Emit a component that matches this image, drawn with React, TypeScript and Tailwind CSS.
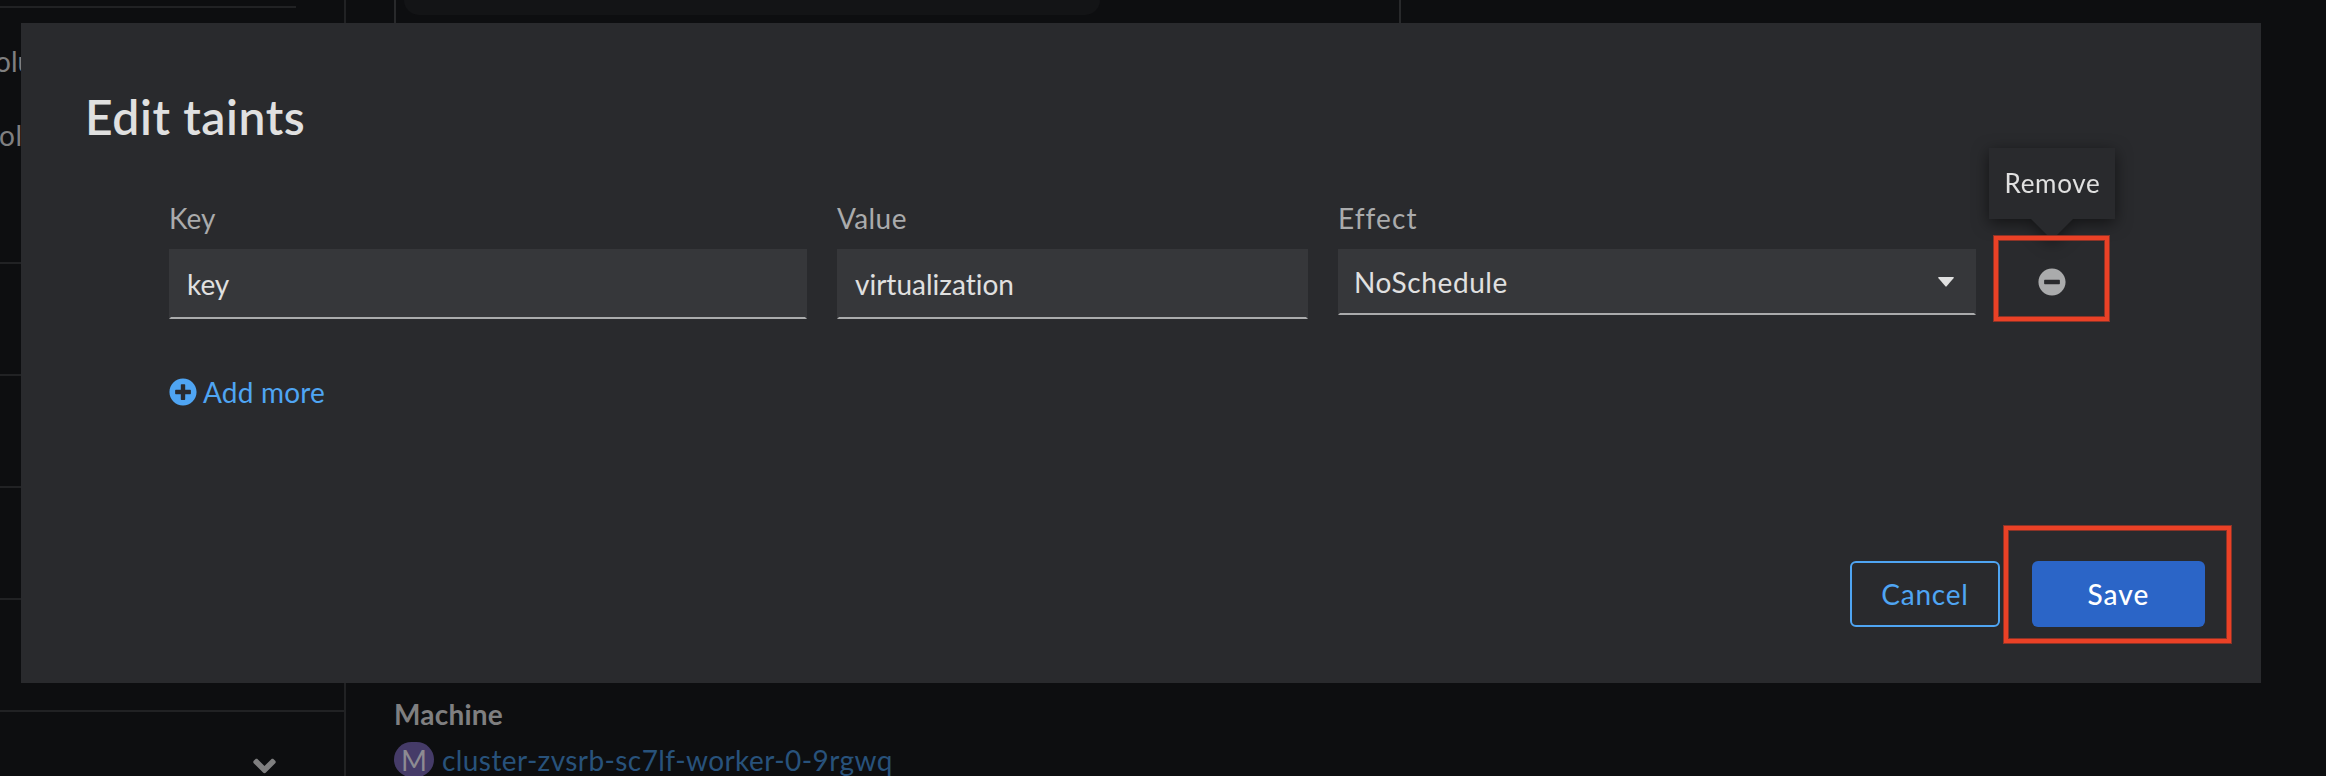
import React from "react";
import { FaPlusCircle, FaMinusCircle, FaAngleDown } from "react-icons/fa";

function Backdrop() {
  return (
    <div className="flex h-[776px] w-full text-[28px] text-[#7f7f80]">
      <aside className="flex w-[346px] shrink-0 flex-col border-r-2 border-[#212224]">
        <div className="h-[8px] w-[296px] border-b-2 border-[#212224]" />
        <div className="h-[256px] border-b-2 border-[#212224] pt-[32px] leading-[42px]">
          <div className="-ml-[5px] h-[74px] whitespace-nowrap">olu</div>
          <div className="-ml-px whitespace-nowrap tracking-[0.5px]">ol</div>
        </div>
        <div className="h-[112px] border-b-2 border-[#212224]" />
        <div className="h-[112px] border-b-2 border-[#212224]" />
        <div className="h-[112px] border-b-2 border-[#212224]" />
        <div className="h-[112px] border-b-2 border-[#212224]" />
        <div className="flex h-[64px] justify-end overflow-hidden pt-[36px] pr-[68px]">
          <FaAngleDown className="h-[36px] w-[23px] shrink-0" />
        </div>
      </aside>
      <main className="flex flex-1 flex-col pl-[48px]">
        <div className="h-[300px] w-[1007px] shrink-0 border-x-2 border-[#28292b] px-[8px]">
          <div className="h-[15px] w-[696px] rounded-b-[30px] bg-[#131416]" />
        </div>
        <div className="pt-[393px]">
          <div className="h-[49px] font-bold leading-[42px] tracking-[0.2px]">Machine</div>
          <div className="flex items-center leading-[34px]">
            <span className="flex h-[35px] w-[40px] items-center justify-center rounded-[20px] bg-[#453b68] text-[#8d8b92]">M</span>
            <span className="ml-[8px] tracking-[0.42px] text-[#28527b]">cluster-zvsrb-sc7lf-worker-0-9rgwq</span>
          </div>
        </div>
      </main>
    </div>
  );
}

type FieldProps = { label: string; value: string; className: string; labelClass?: string };

function Field({ label, value, className, labelClass = "" }: FieldProps) {
  return (
    <div className={className}>
      <div className={`h-[53px] leading-[44px] text-[#aaabac] ${labelClass}`}>{label}</div>
      <div className="flex h-[70px] items-center border-2 border-transparent border-b-[#aaabac] bg-[#36373a] px-[16px] text-[#e0e0e0]">
        {value}
      </div>
    </div>
  );
}

function Highlight({ className }: { className: string }) {
  return (
    <div
      className={`pointer-events-none absolute border-[5px] border-[#ea4126] shadow-[inset_0_0_0_1px_#8c3327] outline-1 -outline-offset-1 outline-[#8c3327] ${className}`}
    />
  );
}

function Modal() {
  return (
    <div className="absolute left-[21px] top-[23px] flex h-[660px] w-[2240px] flex-col bg-[#292a2d] text-[28px]">
      <h1 className="pl-[64px] pt-[65px] text-[48px] font-semibold leading-[58px] tracking-[0.6px] text-[#e0e0e0]">Edit taints</h1>
      <div className="mt-[50px] flex pl-[148px]">
        <Field label="Key" value="key" className="w-[638px]" />
        <Field label="Value" value="virtualization" className="ml-[30px] w-[471px]" labelClass="tracking-[0.4px]" />
        <div className="ml-[30px] w-[638px]">
          <div className="h-[53px] leading-[44px] tracking-[1.1px] text-[#aaabac]">Effect</div>
          <div className="flex h-[66px] items-center justify-between border-2 border-transparent border-b-[#aaabac] bg-[#36373a] pl-[14px] pr-[20px] text-[#e0e0e0]">
            <span className="tracking-[0.6px]">NoSchedule</span>
            <svg viewBox="0 0 16 10" className="h-[10px] w-[16px]" fill="currentColor">
              <path d="M0.8 0H15.2Q16.5 0 15.5 1.2L8.6 9.3Q8 10 7.4 9.3L0.5 1.2Q-.5 0 .8 0Z" />
            </svg>
          </div>
        </div>
        <div className="relative flex w-[152px] flex-col items-center pt-[72px]">
          <FaMinusCircle className="size-[28px] text-[#aaabac]" />
          <div className="absolute left-[13px] top-[-48px] drop-shadow-[0_4px_8px_rgba(0,0,0,0.55)]">
            <div className="h-[71px] w-[126px] bg-[#292a2d] pl-px text-center text-[26px] leading-[70px] tracking-[0.7px] text-[#e0e0e0]">Remove</div>
            <svg viewBox="0 0 44 22" className="mx-auto -mt-px h-[22px] w-[44px]">
              <path d="M0 0H44L22 22Z" fill="#292a2d" />
            </svg>
          </div>
          <Highlight className="left-[17px] top-[39px] h-[87px] w-[117px]" />
        </div>
      </div>
      <div className="mt-[52px] flex items-center pl-[148px] leading-[42px] text-[#4fa5f3]">
        <FaPlusCircle className="size-[28px]" />
        <span className="ml-[6px] tracking-[0.2px]">Add more</span>
      </div>
      <div className="mt-auto flex justify-end gap-[32px] pb-[56px] pr-[56px]">
        <button className="h-[66px] w-[150px] rounded-[6px] border-2 border-[#4fa5f3] tracking-[0.8px] text-[#4fa5f3]">Cancel</button>
        <div className="relative">
          <button className="h-[66px] w-[173px] rounded-[6px] bg-[#2b65c7] font-medium tracking-[1.1px] text-white">Save</button>
          <Highlight className="left-[-29px] top-[-36px] h-[119px] w-[229px]" />
        </div>
      </div>
    </div>
  );
}

export default function App() {
  return (
    <div className="relative h-[776px] w-full overflow-hidden bg-[#0d0e10] font-['Lato',sans-serif] [font-variant-ligatures:none]">
      <Backdrop />
      <Modal />
    </div>
  );
}
